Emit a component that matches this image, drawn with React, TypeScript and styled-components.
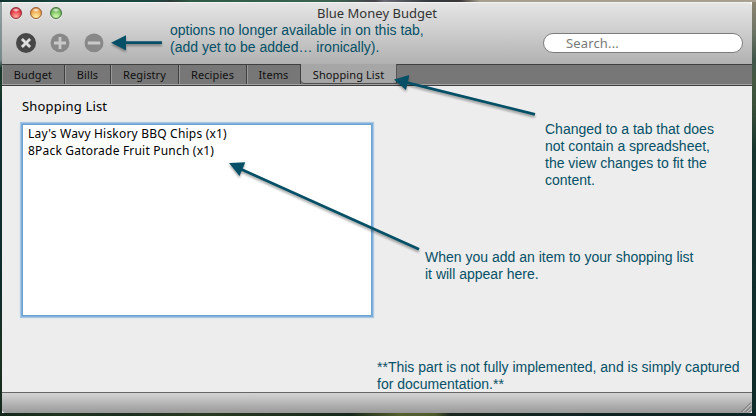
import React from "react";
import styled, { createGlobalStyle } from "styled-components";

const Global = createGlobalStyle`
  * { box-sizing: border-box; }
  html, body { margin: 0; padding: 0; overflow: hidden; }
`;

const uiFont = `"Noto Sans", "Open Sans", sans-serif`;
const ink = "#055066";

const Desktop = styled.div`
  position: relative;
  width: 756px;
  height: 416px;
  padding: 2px 4px 3px 2px;
  overflow: hidden;
  font-family: ${uiFont};
  background:
    linear-gradient(90deg, #10332f 0, #17413c 50px, #1b4843 150px, #2b3a36 170px, #2d5a45 190px, #3a6450 330px, #46434a 375px, #6b6a78 384px, #33383c 430px, #3a3838 460px, #a9a091 480px, #a9a091 100%) top / 100% 2px no-repeat,
    linear-gradient(90deg, #14281c 0, #20351f 60px, #1c2f20 120px, #2a3b22 200px, #17291b 350px, #55602f 400px, #4c5a2c 435px, #1a2820 450px, #0f2422 600px, #0d2526 100%) bottom / 100% 3px no-repeat,
    linear-gradient(180deg, #92a0a0 0, #77898a 60px, #17352a 68px, #1a3b2b 90px, #0e2c30 110px, #0e2b2c 290px, #1b3320 350px, #14281c 100%) left / 2px 100% no-repeat,
    linear-gradient(180deg, #8d8574 0, #6f7566 30px, #40564b 60px, #445840 80px, #3a5038 105px, #17352f 150px, #12302e 200px, #0f2b29 100%) right / 4px 100% no-repeat;
`;

const AppWindow = styled.div`
  display: flex;
  flex-direction: column;
  width: 750px;
  height: 411px;
  border-radius: 5px 5px 4px 4px;
  overflow: hidden;
  background: #ededed;
`;

const Header = styled.header`
  display: flex;
  flex-direction: column;
  height: 62px;
  background: linear-gradient(#e6e6e6, #cfcfcf 45%, #b1b1b1);
  box-shadow: inset 0 1px 0 #f4f4f4;
`;

const TitleBar = styled.div`
  display: grid;
  grid-template-columns: 100px 1fr 100px;
  height: 22px;
  align-items: center;
`;

const Lights = styled.div`
  display: flex;
  gap: 8px;
  padding-left: 8px;
`;

const Light = styled.span<{ $dark: string; $mid: string; $glow: string }>`
  width: 12px;
  height: 12px;
  border-radius: 50%;
  border: 1px solid ${(p) => p.$dark};
  background:
    radial-gradient(ellipse 4px 2px at 50% 20%, rgba(255, 255, 255, 0.95), transparent),
    radial-gradient(circle at 50% 90%, ${(p) => p.$glow} 10%, ${(p) => p.$mid} 65%, ${(p) => p.$dark} 115%);
  box-shadow: 0 1px 0 rgba(255, 255, 255, 0.5);
`;

const Title = styled.div`
  text-align: center;
  font-size: 13px;
  line-height: 20px;
  letter-spacing: 0.02px;
  color: #333;
  white-space: nowrap;
`;

const Toolbar = styled.div`
  display: flex;
  justify-content: space-between;
  align-items: center;
  height: 38px;
  padding: 0 9px 0 14px;
`;

const ToolGroup = styled.div`
  display: flex;
  gap: 14px;
`;

const ToolButton = styled.button<{ $disabled?: boolean }>`
  display: flex;
  width: 20px;
  height: 20px;
  padding: 0;
  border: 0;
  background: none;
  color: ${(p) => (p.$disabled ? "#888" : "#474747")};
`;

const Search = styled.div`
  width: 200px;
  height: 20px;
  padding-left: 22px;
  border: 1px solid #7c7c7c;
  border-radius: 10px;
  background: #fff;
  font-size: 13px;
  line-height: 19px;
  letter-spacing: 0.15px;
  color: #7a7a7a;
`;

const Tabs = styled.nav`
  display: flex;
  height: 22px;
  background: linear-gradient(#777 0 19px, #a3a3a3 19px 20px, #3f3f3f 20px);
  border-top: 1px solid #3f3f3f;
`;

const Tab = styled.div<{ $w: number; $active?: boolean }>`
  width: ${(p) => p.$w}px;
  height: ${(p) => (p.$active ? 20 : 19)}px;
  margin-top: ${(p) => (p.$active ? -1 : 0)}px;
  border-right: 1px solid ${(p) => (p.$active ? "#555" : "#3f3f3f")};
  border-bottom: ${(p) => (p.$active ? "1px solid #4c4c4c" : "0")};
  border-radius: ${(p) => (p.$active ? "0 0 0 4px" : "0")};
  box-shadow: ${(p) => (p.$active ? "none" : "inset 1px 0 0 #999")};
  background: ${(p) => (p.$active ? "#a6a6a6" : "transparent")};
  font-size: 11px;
  line-height: ${(p) => (p.$active ? 22 : 20)}px;
  letter-spacing: 0.1px;
  text-align: center;
  color: #101010;
  white-space: nowrap;
`;

const Content = styled.main`
  flex: 1;
  padding: 10px 20px 0;
`;

const Heading = styled.div`
  height: 28px;
  font-size: 13px;
  line-height: 20px;
  letter-spacing: 0.18px;
  color: #000;
`;

const ListBox = styled.div`
  width: 350px;
  height: 192px;
  padding: 0 5px;
  border: 1px solid #6fa3cf;
  background: #fff;
  box-shadow: 0 0 0 1px #7fb0da, 0 0 1px 2px #a9c9e4;
`;

const ListItem = styled.div`
  height: 17px;
  font-size: 12px;
  line-height: 17px;
  letter-spacing: 0.2px;
  color: #000;
  white-space: nowrap;
`;

const Footer = styled.footer`
  display: flex;
  justify-content: flex-end;
  align-items: flex-end;
  height: 21px;
  border-top: 1px solid #666;
  background: linear-gradient(#d4d4d4, #999);
`;

const Note = styled.div<{ $x: number; $y: number }>`
  position: absolute;
  left: ${(p) => p.$x}px;
  top: ${(p) => p.$y}px;
  font: 14px/17px "Liberation Sans", Arial, sans-serif;
  color: ${ink};
  white-space: pre;
`;

const Arrows = styled.svg`
  position: absolute;
  inset: 0;
  pointer-events: none;
  filter: drop-shadow(0 2px 1px rgba(0, 0, 0, 0.35));
`;

const glyphs = {
  close: "M5.9 5.9 14.1 14.1M14.1 5.9 5.9 14.1",
  add: "M10 4V16M4 10H16",
  remove: "M3.8 10H16.2",
};

function RoundIcon({ kind }: { kind: keyof typeof glyphs }) {
  return (
    <svg width="20" height="20" viewBox="0 0 20 20">
      <circle cx="10" cy="10.6" r="9.4" fill="#eee" opacity="0.5" />
      <circle cx="10" cy="10" r={kind === "close" ? 10 : 9.5} fill="currentColor" />
      <path d={glyphs[kind]} stroke={kind === "close" ? "#dedede" : "#c9c9c9"} strokeWidth="2.8" />
    </svg>
  );
}

const tabs = [
  { label: "Budget", w: 63 },
  { label: "Bills", w: 46 },
  { label: "Registry", w: 68 },
  { label: "Recipies", w: 68 },
  { label: "Items", w: 54 },
  { label: "Shopping List", w: 96, active: true },
];

export default function App() {
  return (
    <>
      <Global />
      <Desktop>
        <AppWindow>
          <Header>
            <TitleBar>
              <Lights>
                <Light $dark="#8c2930" $mid="#e2333e" $glow="#ff9c96" />
                <Light $dark="#98592a" $mid="#eaa04a" $glow="#ffe99b" />
                <Light $dark="#3d7136" $mid="#71b95d" $glow="#caf4a5" />
              </Lights>
              <Title>Blue Money Budget</Title>
            </TitleBar>
            <Toolbar>
              <ToolGroup>
                <ToolButton aria-label="Close"><RoundIcon kind="close" /></ToolButton>
                <ToolButton $disabled aria-label="Add"><RoundIcon kind="add" /></ToolButton>
                <ToolButton $disabled aria-label="Remove"><RoundIcon kind="remove" /></ToolButton>
              </ToolGroup>
              <Search>Search...</Search>
            </Toolbar>
          </Header>
          <Tabs>
            {tabs.map((t) => (
              <Tab key={t.label} $w={t.w} $active={t.active}>{t.label}</Tab>
            ))}
          </Tabs>
          <Content>
            <Heading>Shopping List</Heading>
            <ListBox>
              <ListItem>Lay's Wavy Hiskory BBQ Chips (x1)</ListItem>
              <ListItem>8Pack Gatorade Fruit Punch (x1)</ListItem>
            </ListBox>
          </Content>
          <Footer>
            <svg width="12" height="12" viewBox="0 0 12 12" fill="none">
              <path d="M1.5 11 11 1.5M5.5 11 11 5.5M9.5 11 11 9.5" stroke="#686868" />
              <path d="M2.7 11.2 11.2 2.7M6.7 11.2 11.2 6.7" stroke="#cecece" strokeWidth="0.7" />
            </svg>
          </Footer>
        </AppWindow>
        <Arrows width="756" height="416" viewBox="0 0 756 416" fill={ink} stroke="none">
          <path d="M162 42.7H124M535 114.3 405 82.2M419 249.2 240 168.7" stroke={ink} strokeWidth="2.8" />
          <path d="M111 42.7 126 35.3V50.3ZM394 79.5 409.3 75 406 90ZM229 163 245.3 162.2 239.5 176Z" />
        </Arrows>
        <Note $x={170} $y={22}>{"options no longer available in on this tab,\n(add yet to be added… ironically)."}</Note>
        <Note $x={545} $y={121}>{"Changed to a tab that does\nnot contain a spreadsheet,\nthe view changes to fit the\ncontent."}</Note>
        <Note $x={425} $y={249}>{"When you add an item to your shopping list\nit will appear here."}</Note>
        <Note $x={377} $y={359}>{"**This part is not fully implemented, and is simply captured\nfor documentation.**"}</Note>
      </Desktop>
    </>
  );
}
